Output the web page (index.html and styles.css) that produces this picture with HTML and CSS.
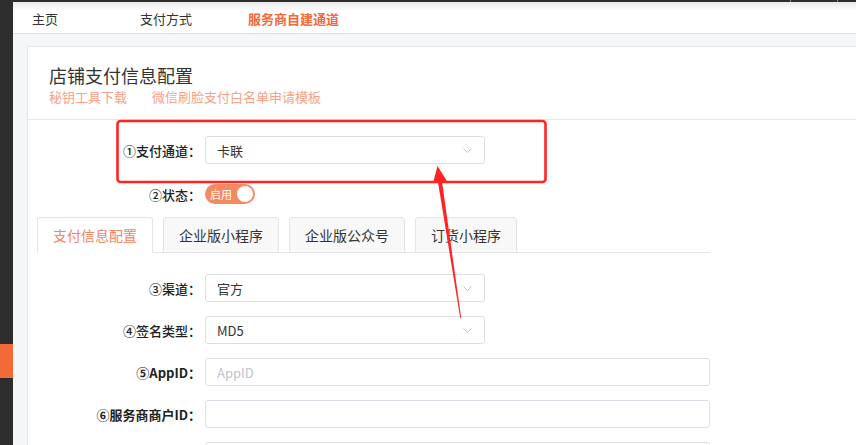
FILE: index.html
```html
<!DOCTYPE html>
<html lang="zh-CN">
<head>
    <meta charset="UTF-8">
    <meta name="viewport" content="width=device-width, initial-scale=1.0">
    <title>店铺支付信息配置</title>
    <link rel="stylesheet" href="styles.css">
</head>
<body>
    <div class="layout">
        <aside class="sidebar">
            <div class="side-active"></div>
        </aside>

        <div class="main">
            <div class="topbar">
                <span class="tb-mark"></span>
                <span class="tb-mark"></span>
            </div>

            <nav class="nav">
                <a class="nav-item">主页</a>
                <a class="nav-item">支付方式</a>
                <a class="nav-item active">服务商自建通道</a>
            </nav>

            <div class="content">
                <div class="card">
                    <div class="card-head">
                        <h2 class="card-title">店铺支付信息配置</h2>
                        <div class="card-links">
                            <a>秘钥工具下载</a>
                            <a>微信刷脸支付白名单申请模板</a>
                        </div>
                    </div>

                    <div class="card-body">
                        <div class="form-row">
                            <label class="form-label">①支付通道：</label>
                            <div class="select">
                                <span>卡联</span>
                                <svg class="chevron" width="9" height="5" viewBox="0 0 9 5"><path d="M0.5 0.5 L4.5 4.5 L8.5 0.5" fill="none" stroke="#c0c4cc" stroke-width="1"/></svg>
                            </div>
                        </div>

                        <div class="form-row row-switch">
                            <label class="form-label">②状态：</label>
                            <div class="switch">
                                <span class="switch-text">启用</span>
                                <span class="switch-knob"></span>
                            </div>
                        </div>

                        <div class="tabs">
                            <div class="tab active">支付信息配置</div>
                            <div class="tab">企业版小程序</div>
                            <div class="tab">企业版公众号</div>
                            <div class="tab">订货小程序</div>
                        </div>

                        <div class="tab-panel">
                            <div class="form-row">
                                <label class="form-label">③渠道：</label>
                                <div class="select">
                                    <span>官方</span>
                                    <svg class="chevron" width="9" height="5" viewBox="0 0 9 5"><path d="M0.5 0.5 L4.5 4.5 L8.5 0.5" fill="none" stroke="#c0c4cc" stroke-width="1"/></svg>
                                </div>
                            </div>
                            <div class="form-row">
                                <label class="form-label">④签名类型：</label>
                                <div class="select">
                                    <span>MD5</span>
                                    <svg class="chevron" width="9" height="5" viewBox="0 0 9 5"><path d="M0.5 0.5 L4.5 4.5 L8.5 0.5" fill="none" stroke="#c0c4cc" stroke-width="1"/></svg>
                                </div>
                            </div>
                            <div class="form-row">
                                <label class="form-label strong">⑤AppID：</label>
                                <input class="input" type="text" placeholder="AppID">
                            </div>
                            <div class="form-row">
                                <label class="form-label strong">⑥服务商商户ID：</label>
                                <input class="input" type="text">
                            </div>
                            <div class="form-row">
                                <label class="form-label"></label>
                                <input class="input" type="text">
                            </div>
                        </div>
                    </div>
                </div>
            </div>
        </div>
    </div>

    <!-- red markup drawn over the screenshot -->
    <svg class="annotation" width="856" height="445" viewBox="0 0 856 445">
        <rect x="117.5" y="121" width="428" height="61" rx="3" fill="none" stroke="#ff2323" stroke-width="2.6"/>
        <polygon points="437.5,166 446.8,180.8 442,181.6 461.2,318 460.2,318 438,182.2 433,182.9" fill="#ff2323"/>
    </svg>
</body>
</html>
```

FILE: styles.css
```css
* {
    box-sizing: border-box;
    margin: 0;
    padding: 0;
}

body {
    font-family: "Noto Sans CJK SC", "Noto Sans", sans-serif;
    font-size: 13px;
    color: #333;
    background-color: #fff;
    width: 856px;
    height: 445px;
    overflow: hidden;
    position: relative;
}

.layout {
    display: flex;
    height: 445px;
}

.sidebar {
    width: 13px;
    flex-shrink: 0;
    background-color: #2e2e2e;
    padding-top: 344px;
}

.side-active {
    height: 34px;
    background-color: #f46a37;
}

.main {
    flex: 1;
    display: flex;
    flex-direction: column;
    min-width: 0;
}

.topbar {
    height: 2px;
    flex-shrink: 0;
    background-color: #2e2e2e;
    display: flex;
    justify-content: flex-end;
    padding-right: 18px;
    gap: 46px;
}

.tb-mark {
    width: 1px;
    height: 2px;
    background-color: #888;
}

.nav {
    height: 32px;
    flex-shrink: 0;
    display: flex;
    align-items: center;
    padding-left: 19px;
    background: linear-gradient(#e9e9e9, #fff 9px);
    border-bottom: 1px solid #dcdcdc;
}

.nav-item {
    width: 108px;
    color: #333;
    line-height: 20px;
    padding-top: 2px;
}

.nav-item.active {
    color: #f4683a;
    font-weight: bold;
}

.content {
    flex: 1;
    min-height: 0;
    overflow: hidden;
    background-color: #f5f6fa;
    padding: 12px 0 0 14px;
}

.card {
    min-height: 100%;
    background-color: #fff;
    border: 1px solid #e6e6e6;
    border-right: none;
}

.card-head {
    padding: 16px 21px 12px;
    border-bottom: 1px solid #e6e6e6;
}

.card-title {
    font-size: 18px;
    font-weight: normal;
    line-height: 24px;
    color: #333;
}

.card-links {
    display: flex;
    gap: 25px;
    line-height: 20px;
}

.card-links a {
    color: #f7a189;
}

.card-body {
    padding-top: 16px;
}

.form-row {
    display: flex;
    align-items: center;
    height: 28px;
    margin-bottom: 14px;
}

.row-switch {
    height: 20px;
    margin-top: 20px;
    margin-bottom: 13px;
}

.form-label {
    width: 177px;
    flex-shrink: 0;
    text-align: right;
    padding-right: 4px;
    color: #222;
    font-weight: 500;
    white-space: nowrap;
}

.form-label.strong {
    font-weight: bold;
}

.select {
    width: 280px;
    height: 28px;
    border: 1px solid #dcdfe6;
    border-radius: 3px;
    display: flex;
    align-items: center;
    justify-content: space-between;
    padding: 0 12px 0 11px;
    color: #333;
}

.chevron {
    display: block;
}

.input {
    width: 505px;
    height: 28px;
    border: 1px solid #dcdfe6;
    border-radius: 3px;
    padding: 0 11px;
    font-family: inherit;
    font-size: 13px;
    color: #333;
    outline: none;
}

.input::placeholder {
    color: #c0c4cc;
}

.switch {
    width: 50px;
    height: 20px;
    flex-shrink: 0;
    border-radius: 10px;
    background-color: #f5895f;
    display: flex;
    align-items: center;
    justify-content: space-between;
    padding: 0 2px 0 5px;
}

.switch-text {
    color: #fff;
    font-size: 11px;
    line-height: 1;
}

.switch-knob {
    width: 16px;
    height: 16px;
    border-radius: 50%;
    background-color: #fff;
}

.tabs {
    display: flex;
    gap: 10px;
    width: 673px;
    margin-left: 9px;
    height: 36px;
    border-bottom: 1px solid #e4e4e4;
}

.tab {
    height: 36px;
    padding: 0 15px;
    font-size: 14px;
    line-height: 34px;
    color: #333;
    background-color: #f8f8f8;
    border: 1px solid #e4e4e4;
    border-radius: 3px 3px 0 0;
}

.tab.active {
    color: #f7845a;
    background-color: #fff;
    border-bottom-color: #fff;
}

.tab-panel {
    padding-top: 21px;
}

.annotation {
    position: absolute;
    top: 0;
    left: 0;
    pointer-events: none;
}
```
